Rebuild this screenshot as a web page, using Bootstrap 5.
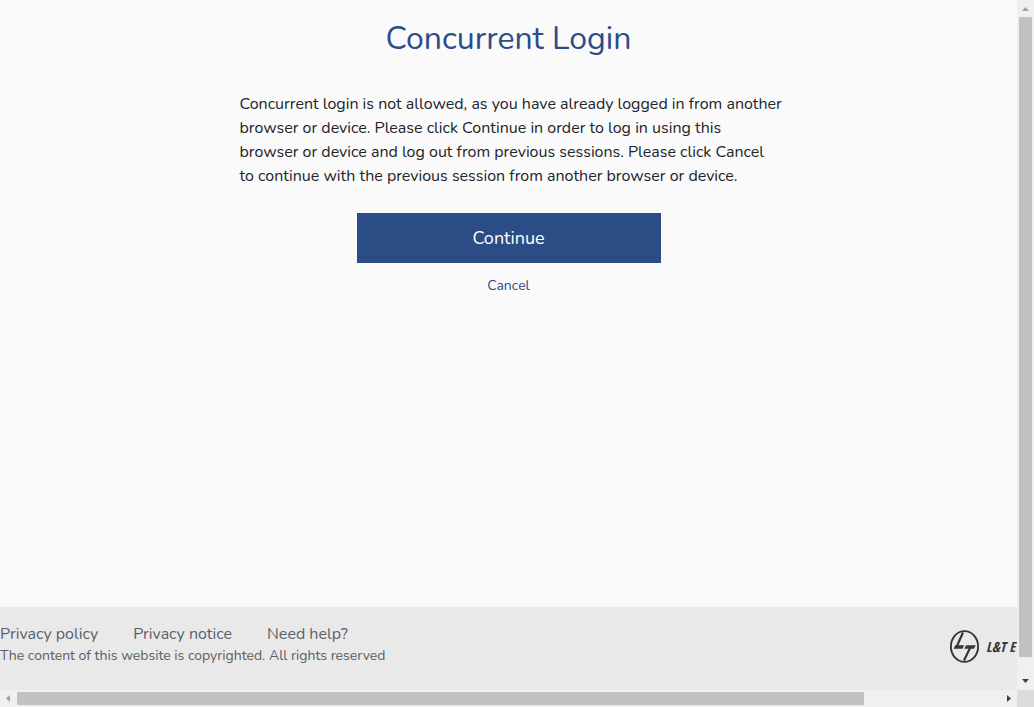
<!DOCTYPE html>
<html lang="en">
<head>
<meta charset="utf-8">
<meta name="viewport" content="width=device-width, initial-scale=1">
<title>Concurrent Login</title>
<link rel="stylesheet" href="https://cdn.jsdelivr.net/npm/bootstrap@5.3.0/dist/css/bootstrap.min.css">
<style>
body { font-family: Nunito, Lato, sans-serif; background: #fafafa; color: #212529; }
.shell { display: grid; grid-template-columns: minmax(0, 1fr) 17px; grid-template-rows: minmax(0, 1fr) 17px; }
.notice { max-width: 562px; }
.title { font-size: 32px; line-height: 38px; margin: 20px 0 34px; color: #2c4c86; font-weight: 400; }
.message { font-size: 16px; line-height: 24px; padding-left: 12px; margin-bottom: 25px; }
.btn-continue { width: 304px; max-width: 100%; height: 50px; background: #2c4c86; color: #fff; font-size: 18px; line-height: 24px; }
.btn-continue:hover { background: #233e70; color: #fff; }
.cancel { font-size: 14px; line-height: 22px; color: #2c4c86; }
.site-footer { background: #e9e9e9; height: 83px; color: #5c5d63; }
.site-footer a { color: #5c5f6d; font-size: 16px; line-height: 22px; }
.links { gap: 35px; }
.copyright { font-size: 14px; line-height: 22px; }
.brand { width: 67px; gap: 7px; color: #363637; }
.brand-name { font: italic 700 14px/20px "Open Sans Condensed", "Noto Sans Condensed", "Open Sans", sans-serif; }
.bar { background: #f0f0f0; }
.thumb { background: #c1c1c1; }
.bar-y .thumb { flex: 0 1 640px; width: 13px; }
.bar-x .thumb { flex: 0 1 847px; height: 13px; }
.bar svg { flex: none; }
.corner { background: #dcdcdc; }
</style>
</head>
<body>
<div class="shell vh-100 overflow-hidden">
  <div class="d-flex flex-column overflow-hidden">
    <main class="flex-grow-1 notice w-100 mx-auto d-flex flex-column align-items-center">
      <h1 class="title text-center">Concurrent Login</h1>
      <p class="message w-100">Concurrent login is not allowed, as you have already logged in from another<br>
        browser or device. Please click Continue in order to log in using this<br>
        browser or device and log out from previous sessions. Please click Cancel<br>
        to continue with the previous session from another browser or device.</p>
      <button type="button" class="btn btn-continue rounded-0 border-0">Continue</button>
      <a href="#" class="cancel text-decoration-none mt-2 pt-1">Cancel</a>
    </main>
    <footer class="site-footer d-flex justify-content-between">
      <div class="pt-3">
        <nav class="links d-flex" aria-label="Footer">
          <a href="#" class="text-decoration-none">Privacy policy</a>
          <a href="#" class="text-decoration-none">Privacy notice</a>
          <a href="#" class="text-decoration-none">Need help?</a>
        </nav>
        <div class="copyright">The content of this website is copyrighted. All rights reserved</div>
      </div>
      <div class="brand d-flex align-items-center overflow-hidden text-nowrap pb-1">
        <svg class="flex-shrink-0" width="29" height="33" viewBox="0 0 29 33" aria-hidden="true">
          <ellipse cx="14.5" cy="16.5" rx="13.6" ry="15.4" fill="none" stroke="#363637" stroke-width="1.9"/>
          <path d="M13 2.500 6.500 17M20.500 17 14 30.500" fill="none" stroke="#363637" stroke-width="2.2"/>
          <path d="M3.500 18.700 5.300 15.300H14.200L12.500 18.700zM14.200 18.700 16.200 15.300H25.800L24 18.700z" fill="#363637"/>
        </svg>
        <span class="brand-name">L&amp;T E</span>
      </div>
    </footer>
  </div>
  <div class="bar bar-y d-flex flex-column align-items-center" aria-hidden="true">
    <svg width="17" height="17"><path d="M5 11h7L8.500 7z" fill="#a0a0a0"/></svg>
    <div class="thumb"></div>
    <svg class="mt-auto" width="17" height="17"><path d="M5 6h7L8.500 10z" fill="#404040"/></svg>
  </div>
  <div class="bar bar-x d-flex align-items-center" aria-hidden="true">
    <svg width="17" height="17"><path d="M10 5v7L6 8.500z" fill="#a0a0a0"/></svg>
    <div class="thumb"></div>
    <svg class="ms-auto" width="17" height="17"><path d="M7 5v7l4-3.500z" fill="#404040"/></svg>
  </div>
  <div class="corner"></div>
</div>
<script src="https://cdn.jsdelivr.net/npm/bootstrap@5.3.0/dist/js/bootstrap.bundle.min.js"></script>
</body>
</html>
